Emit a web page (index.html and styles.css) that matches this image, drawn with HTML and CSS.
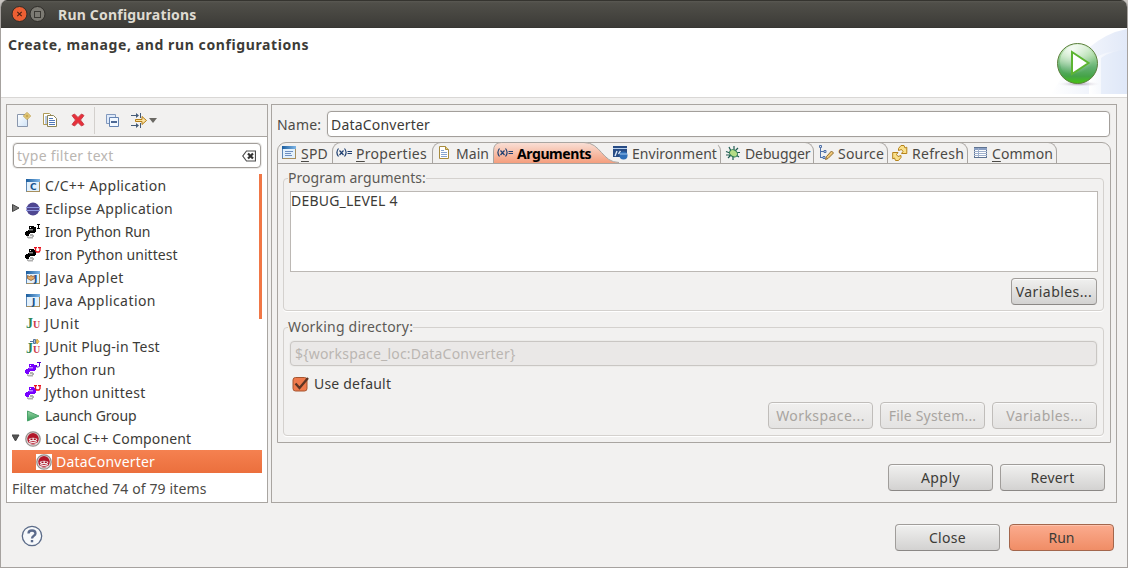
FILE: index.html
```html
<!DOCTYPE html>
<html lang="en">
<head>
<meta charset="utf-8">
<title>Run Configurations</title>
<link rel="stylesheet" href="styles.css">
</head>
<body>
<svg class="defs" width="0" height="0">
  <defs>
    <linearGradient id="paper" x1="0" y1="0" x2="1" y2="1"><stop offset="0" stop-color="#fff"/><stop offset="1" stop-color="#cfe3f7"/></linearGradient>
    <linearGradient id="bar" x1="0" y1="0" x2="1" y2="0"><stop offset="0" stop-color="#1b5d9e"/><stop offset="1" stop-color="#7fb6e6"/></linearGradient>
    <linearGradient id="salmon" x1="0" y1="0" x2="0" y2="1"><stop offset="0" stop-color="#f9e0d7"/><stop offset="1" stop-color="#f59e7d"/></linearGradient>
    <linearGradient id="ball" x1="0" y1="0" x2="0" y2="1"><stop offset="0" stop-color="#d9f0d3"/><stop offset=".3" stop-color="#a5d8a0"/><stop offset=".6" stop-color="#62b070"/><stop offset=".82" stop-color="#45a348"/><stop offset="1" stop-color="#45c411"/></linearGradient>
    <radialGradient id="glow" cx=".35" cy=".15" r=".7"><stop offset="0" stop-color="#fff" stop-opacity=".85"/><stop offset="1" stop-color="#fff" stop-opacity="0"/></radialGradient>
    <linearGradient id="swoosh" x1="0" y1="0" x2="1" y2="0"><stop offset="0" stop-color="#fff"/><stop offset="1" stop-color="#e2e9f8"/></linearGradient>
    <radialGradient id="shadow"><stop offset="0" stop-color="#a59bb0"/><stop offset="1" stop-color="#fff" stop-opacity="0"/></radialGradient>
    <linearGradient id="play" x1="0" y1="0" x2="0" y2="1"><stop offset="0" stop-color="#9ad4a6"/><stop offset="1" stop-color="#2f9a55"/></linearGradient>
  </defs>
  <symbol id="i-win" viewBox="0 0 16 16"><rect x="1.500" y="1.500" width="13" height="12" fill="#e3f1fc" stroke="#a88f5e"/><rect x="1" y="1" width="14" height="3" fill="url(#bar)"/><path d="M1.500 4v9.500" stroke="#5d87b5"/></symbol>
  <symbol id="i-python" viewBox="0 0 16 16"><path d="M4 2h5v1h2v5h-1v1H5v1H4v2H1v-1H0V8h1V7h2V6h1V3z" fill="currentColor"/><path d="M5 3h1v1H5zM4 5.500h4v.8H4z" fill="#fff"/><path d="M5 10h3v1h1v2H8v1.500H3V14H2v-2h3z" class="py-low"/><path d="M3 12h4v1H3z" fill="#fff" opacity=".7"/></symbol>
  <symbol id="i-u" viewBox="0 0 16 16"><path d="M9 .5h3M13 .5h3M10.500.500v3l1 1.500h2.500l1-1.500v-3" stroke="#e8101c" stroke-width="1.300" fill="none"/></symbol>
  <symbol id="i-xeq" viewBox="0 0 16 16"><path d="M2.500 3.500C.5 6 .5 9 2.500 11.500M8.500 3.500c2 2.500 2 5.500 0 8M3.500 5.500l4 4.500M7.500 5.500l-4 4.500" fill="none" stroke="#1f3f70" stroke-width="1.200"/><path d="M11.500 6.500h4.500M11.500 8.500h4.500" stroke="#1f3f70"/></symbol>
  <symbol id="i-skull" viewBox="0 0 16 16"><rect width="16" height="16" fill="#fff"/><circle cx="8" cy="8" r="7.200" fill="#e6e4e4" stroke="#97918f" stroke-width="1.300"/><circle cx="8" cy="7.800" r="5.800" fill="#b2172a"/><path d="M3.500 8Q8 5.500 12.500 8L11 10H5z" fill="#f3e9ea"/><path d="M5.500 7.500h2v1.500h-2zM8.800 7.500h2v1.500h-2z" fill="#a01020"/><path d="M4 12.500l8-2M4 10.500l8 2" stroke="#f3e9ea" stroke-width="1.200"/></symbol>
</svg>
<div class="window">
  <header class="titlebar">
    <svg class="wbtns" width="36" height="20" viewBox="0 0 36 20"><circle cx="9.500" cy="10" r="7.500" fill="#ec5f33" stroke="#2e2c28"/><path d="M7.300 7.800l4.400 4.400m0-4.400l-4.400 4.400" stroke="#4e2214" stroke-width="1.200"/><circle cx="27.500" cy="10" r="7.500" fill="#7c7a73" stroke="#2e2c28"/><rect x="24.500" y="7.500" width="6" height="6" fill="none" stroke="#3b3934"/></svg>
    <span class="t">Run Configurations</span>
  </header>
  <section class="banner">
    <span class="t heading">Create, manage, and run configurations</span>
    <svg class="art" width="76" height="69" viewBox="0 0 76 69"><path d="M0 66Q35 8 76 1V66z" fill="url(#swoosh)"/><path d="M38 66V33Q55 22 76 22V66z" fill="url(#swoosh)"/><path d="M50 30Q62 22 76 22V66H50z" fill="#dbe5f7" opacity=".5"/><ellipse cx="28" cy="56" rx="23" ry="3" fill="url(#shadow)"/><circle cx="26.500" cy="35.500" r="20" fill="url(#ball)" stroke="#5c7f3c"/><circle cx="26.500" cy="34" r="17.500" fill="url(#glow)"/><path d="M21 24v22l16.500-11z" fill="#fff" stroke="#5cb531" stroke-width="2"/></svg>
  </section>
  <main class="content">
    <section class="left">
      <div class="toolbar">
        <svg class="ic" width="16" height="16"><path d="M1.500 2.500h8l2 2v10h-10z" fill="url(#paper)" stroke="#8a97ad"/><path d="M11 .5L14.500 4 11 7.500 7.500 4z" fill="#fff3b8" stroke="#b8902c"/><path d="M11 2v4M9 4h4" stroke="#b8902c"/></svg>
        <svg class="ic copy" width="16" height="16"><path d="M1.500 1.500h6l2 2v9h-8z" fill="#fff" stroke="#b09b56"/><path d="M3 5h2M3 7h2M3 9h2M3 11h2" stroke="#6f8fc0"/><path d="M5.500 3.500h6l3 3v8h-9z" fill="#fff" stroke="#8c8455"/><path d="M7 6.500h4M7 8.500h6M7 10.500h6M7 12.500h6" stroke="#5078b8"/></svg>
        <svg class="ic del" width="16" height="16"><path d="M2 3.500L4.500 2 8 5.500 11.500 2 14 3.500 10.500 8 14 12.500 11.500 14 8 10.500 4.500 14 2 12.500 5.500 8z" fill="#e8303a" stroke="#c8404a"/></svg>
        <i class="sep"></i>
        <svg class="ic" width="16" height="16"><path d="M2.500 2.500h9v9h-9z" fill="#dfeafa" stroke="#8299bd"/><path d="M5.500 5.500h9v9h-9z" fill="#f2f8ff" stroke="#6483b1"/><path d="M7 10h6" stroke="#163a72" stroke-width="1.500"/></svg>
        <svg class="ic flt" width="26" height="16"><path d="M0 3.500h7M0 13.500h7M9.500 1v5M9.500 11v5" stroke="#445b78" fill="none"/><path d="M5 1l3 2.500L5 6M5 11l3 2.500-3 2.500" fill="#445b78"/><path d="M4.500 7.500h6.500v-3l4.500 4-4.500 4v-3H4.500z" fill="#fbe2a0" stroke="#b57e18"/><path d="M18 6h8l-4 5z" fill="#6b6964"/></svg>
      </div>
      <div class="filter"><span class="t s3 ph">type filter text</span>
        <svg width="14" height="12"><path d="M4.500 1h9v10h-9L.8 6z" fill="#fff" stroke="#4c4c4c" stroke-width="1.200"/><path d="M6 3.500l5 5m0-5l-5 5" stroke="#333" stroke-width="2.200"/></svg></div>
      <div class="treewrap">
      <ul class="tree">
        <li><svg class="ic"><use href="#i-win"/><text x="5" y="12" class="g">C</text></svg><span class="t s3">C/C++ Application</span></li>
        <li><svg class="tw"><path d="M.5.500L7 4 .5 7.500z" fill="#777" stroke="#444"/></svg><svg class="ic"><circle cx="8" cy="8" r="6.500" fill="#4f4791"/><path d="M1 6.500h14M1 9.500h14" stroke="#8f97df"/></svg><span class="t s3">Eclipse Application</span></li>
        <li><svg class="ic py-k"><use href="#i-python"/><path d="M12 .5h3M12 4.500h3M13.500 0v5" stroke="#000"/></svg><span class="t sn">Iron Python Run</span></li>
        <li><svg class="ic py-k"><use href="#i-python"/><use href="#i-u"/></svg><span class="t s0">Iron Python unittest</span></li>
        <li><svg class="ic"><use href="#i-win"/><path d="M2.500 5.500l2 1 1.500-1 2 1 1.500-1v3L6 10.500 2.500 8.500z" fill="#e3ac68" stroke="#7c4b20" stroke-width=".7"/><text x="9" y="12" class="g">J</text></svg><span class="t s5">Java Applet</span></li>
        <li><svg class="ic"><use href="#i-win"/><text x="7" y="12" class="g">J</text></svg><span class="t s4">Java Application</span></li>
        <li><svg class="ic"><text x="1" y="12" class="j">J</text><text x="8" y="12" class="u">U</text></svg><span class="t s7">JUnit</span></li>
        <li><svg class="ic"><text x="1" y="14" class="j">J</text><text x="8" y="14" class="u">U</text><path d="M5 2.500h4M8.500.500v4h2v-4z" fill="#9dbbe4" stroke="#56749c"/><path d="M12 0l2 2.500L12 5l-1-2.500z" fill="#f1c34c" stroke="#b98a2a" stroke-width=".7"/></svg><span class="t">JUnit Plug-in Test</span></li>
        <li><svg class="ic py-j"><use href="#i-python"/><path d="M12 .5h4M14.500 0v4l-1 1h-2V3" stroke="#50c" fill="none"/></svg><span class="t">Jython run</span></li>
        <li><svg class="ic py-j"><use href="#i-python"/><use href="#i-u"/></svg><span class="t s3">Jython unittest</span></li>
        <li><svg class="ic"><path d="M2.500 3v10L14 8z" fill="url(#play)" stroke="#4ba36b"/></svg><span class="t sn">Launch Group</span></li>
        <li><svg class="tw"><path d="M0 1h7L3.500 7z" fill="#555" stroke="#444"/></svg><svg class="ic"><use href="#i-skull"/></svg><span class="t s1">Local C++ Component</span></li>
        <li class="child"><svg class="ic"><use href="#i-skull"/></svg><span class="t">DataConverter</span></li>
      </ul><i class="scroll"></i></div>
      <p class="status"><span class="t s1">Filter matched 74 of 79 items</span></p>
    </section>
    <section class="right">
      <div class="namerow"><span class="t lbl">Name:</span><div class="input"><span class="t">DataConverter</span></div></div>
      <div class="folder">
        <nav class="tabs">
          <div class="tab spd"><svg class="ic"><use href="#i-win"/><path d="M4 6.500h8M4 8.500h6M4 10.500h7" stroke="#6f8fc0"/></svg><span class="t"><u>S</u>PD</span></div>
          <div class="tab prop"><svg class="ic"><use href="#i-xeq"/></svg><span class="t s3"><u>P</u>roperties</span></div>
          <div class="tab mainp"><svg class="ic"><path d="M3.500 1.500h6l3 3v9h-9z" fill="#fff" stroke="#a88b3e"/><path d="M9.500 1.500v3h3" fill="#ead37c" stroke="#a88b3e"/><path d="M5 5.500h3M5 7.500h6M5 9.500h6M5 11.500h6" stroke="#86a3cf"/></svg><span class="t s0">Main</span></div>
          <div class="tab args"><svg class="shape" width="130" height="21"><path d="M.5 21V9Q.5.500 8.500.500H91C108 .5 109 20.500 126 20.500V21z" fill="url(#salmon)"/><path d="M.5 21V9Q.5.500 8.500.500H91C108 .5 109 20.500 126 20.500" fill="none" stroke="#aaa6a2"/></svg><svg class="ic"><use href="#i-xeq"/></svg><span class="t">Arguments</span></div>
          <div class="tab r env"><svg class="ic"><rect x="1" y="1" width="14" height="11" fill="#274b84"/><path d="M1 3.500h14" stroke="#b9d0ee"/><path d="M3 11l2-5m1.500 3l2-3" stroke="#dbe8f8" stroke-width="1.400"/><circle cx="11.500" cy="10.500" r="4" fill="#2f6fb8"/><path d="M8 9h7" stroke="#9cc4ee"/></svg><span class="t s0">Environment</span></div>
          <div class="tab r dbg"><svg class="ic"><path d="M4 2l2 4M1 6.500l4 1.500M9 1v4M13 3l-3 3M15 7.500h-3M14 12l-3-2M8 11v4M3 13l3-3M1 10h4" stroke="#1d5a50" stroke-width="1.200"/><ellipse cx="8.500" cy="8.300" rx="4.200" ry="3.300" fill="#b5dd86" stroke="#2d7a55" transform="rotate(35 8.500 8.300)"/></svg><span class="t sn">Debugger</span></div>
          <div class="tab r src"><svg class="ic"><path d="M2.500 3v10M2.500 6.500h4M2.500 12.500h4" stroke="#5272a8" fill="none"/><path d="M1.500.500h2v2h-2zM6 5.500h2v2h-2zM5 11.500h2v2H5z" fill="#dfeafa" stroke="#5272a8"/><path d="M7.500 14.500l1-3 5-5.500 2 2-5.500 5.500z" fill="#f0c878" stroke="#8f6a2c"/></svg><span class="t">Source</span></div>
          <div class="tab r ref"><svg class="ic"><path d="M6.500 3.500L9 .5h3l1 2.500 1.800-.8V8.500H9.500l1.500-2-1.500-2-3 1z" fill="#fae08a" stroke="#b5821a"/><path d="M9 12.500L6.500 15.500h-3L2.500 13l-1.800.8V7.500H6l-1.500 2 1.500 2 3-1z" fill="#fae08a" stroke="#b5821a"/></svg><span class="t s3">Refresh</span></div>
          <div class="tab r com"><svg class="ic"><rect x="2.500" y="2.500" width="12" height="10" fill="#fff" stroke="#5f7391"/><path d="M2 4h13" stroke="#8ba0c4" stroke-width="2"/><path d="M2 6.500h13M2 8.500h13M2 10.500h13M6.500 3v9" stroke="#9fb0cc"/></svg><span class="t s0"><u>C</u>ommon</span></div>
        </nav>
        <div class="page">
          <fieldset class="group g1"><legend><span class="t s0">Program arguments:</span></legend>
            <div class="area"><span class="t">DEBUG_LEVEL 4</span></div>
            <div class="btns"><button class="b small"><span class="t s4">Variables...</span></button></div>
          </fieldset>
          <fieldset class="group g2"><legend><span class="t">Working directory:</span></legend>
            <div class="input off"><span class="t">${workspace_loc:DataConverter}</span></div>
            <div class="check"><svg width="18" height="18"><rect x="2" y="2.500" width="14" height="13.500" rx="2.500" fill="#ef7a4c" stroke="#a5552f"/><path d="M4.500 8.500l4 4.500L17 3" fill="none" stroke="#5e3524" stroke-width="2.300"/></svg><span class="t">Use default</span></div>
            <div class="btns"><button class="b dis"><span class="t s4">Workspace...</span></button><button class="b dis"><span class="t">File System...</span></button><button class="b dis"><span class="t s4">Variables...</span></button></div>
          </fieldset>
        </div>
      </div>
      <div class="btns apply"><button class="b"><span class="t s4">Apply</span></button><button class="b"><span class="t s3">Revert</span></button></div>
    </section>
  </main>
  <footer class="footer">
    <svg width="22" height="22"><circle cx="11" cy="11" r="9.700" fill="#f7f9fb" stroke="#5b6b88" stroke-width="1.300"/><path d="M7.500 8.500C7.500 4.500 14.500 4.500 14.500 8.500 14.500 11 11 10.500 11 13.500" fill="none" stroke="#5b6b8c" stroke-width="2.300"/><path d="M9.800 15h2.400v2.300H9.800z" fill="#5b6b8c"/></svg>
    <div class="btns end"><button class="b"><span class="t s3">Close</span></button><button class="b run"><span class="t s0">Run</span></button></div>
  </footer>
</div>
</body>
</html>
```
FILE: styles.css
```css
* { box-sizing: border-box; }
body { margin: 0; font: 14px/23px "Noto Sans", sans-serif; color: #3c3b37; background: #c8c4c0; }
.defs { position: absolute; }
.t { white-space: nowrap; letter-spacing: .2px; }
.sn { letter-spacing: -.12px; }
.s0 { letter-spacing: .04px; }
.s1 { letter-spacing: .12px; }
.s3 { letter-spacing: .3px; }
.s4 { letter-spacing: .43px; }
.s5 { letter-spacing: .54px; }
.s7 { letter-spacing: .7px; }
.ic { width: 16px; height: 16px; flex: none; }
.window { width: 1128px; height: 568px; display: flex; flex-direction: column; background: #f2f1f0; border: 1px solid #a6a29f; border-top: 0; border-radius: 7px 7px 0 0; overflow: hidden; }
.titlebar { height: 28px; flex: none; margin: 0 -1px; padding-left: 10px; display: flex; align-items: center; gap: 12px; background: linear-gradient(#35342f 0, #35342f 1px, #5a5953 1px, #504f49 3px, #3c3b37 27px, #33322e 28px); color: #dfdbd2; font-weight: bold; }
.banner { height: 70px; flex: none; background: #fff; border-bottom: 1px solid #d9d7d5; display: flex; justify-content: space-between; padding-left: 7px; }
.heading { font-weight: bold; line-height: 34px; letter-spacing: .6px; }
.content { display: flex; gap: 3px; padding: 6px 0 0 5px; }
.left, .right { height: 399px; border: 1px solid #a9a5a1; }
.left { width: 262px; background: #fff; }
.toolbar { height: 32px; background: #f2f1f0; border-bottom: 1px solid #a9a5a1; display: flex; align-items: center; padding: 0 0 1px 9px; }
.copy { margin-left: 10px; }
.del { margin-left: 12px; }
.sep { width: 1px; height: 27px; background: #d3d0cd; margin: 0 9px 0 8px; }
.flt { width: 26px; margin-left: 11px; }
.filter, .input { height: 26px; border: 1px solid #a39f9b; border-radius: 4px; background: #fff; box-shadow: 0 0 0 1px #ecebe9; display: flex; align-items: center; padding: 0 4px; }
.filter { width: 248px; height: 25px; margin: 6px 0 0 6px; padding-left: 3px; justify-content: space-between; }
.ph { color: #bab6b2; }
.treewrap { margin: 6px 0 0 5px; width: 250px; position: relative; }
.tree { list-style: none; margin: 0; padding: 0; }
.tree li { height: 23px; display: flex; align-items: center; padding-left: 13px; gap: 4px; }
.tw { width: 8px; height: 8px; margin: 0 0 2px -13px; flex: none; }
.tw + .ic { margin-left: 1px; }
.tree li.child { padding-left: 24px; background: linear-gradient(#f58150, #eb6f3d); color: #fff; }
.scroll { position: absolute; right: 0; top: 0; width: 3px; height: 145px; background: #f07746; }
.status { margin: 4px 0 0 5px; color: #4c4a46; }
.g { font: bold 9px "DejaVu Sans", sans-serif; fill: #17528c; }
.j { font: bold 14px "Liberation Serif", serif; fill: #2e8555; }
.u { font: bold 10px "Liberation Serif", serif; fill: #cc3a4b; }
.py-k { color: #000; }
.py-low { fill: #b0b0b0; }
.py-j { color: #70f; }
.py-j .py-low { fill: #a8d4f8; }
.right { width: 846px; }
.namerow { display: flex; padding: 6px 6px 0 5px; align-items: center; }
.lbl { width: 50px; color: #4c4a46; }
.namerow .input { flex: 1; padding: 0 3px; }
.folder { margin: 5px 0 0 5px; width: 834px; height: 301px; border: 1px solid #a9a5a1; border-radius: 9px 9px 0 0; }
.tabs { height: 21px; display: flex; border-bottom: 1px solid #a9a5a1; color: #4c4a46; }
.tab { display: flex; align-items: center; position: relative; flex: none; }
.tab .t { position: relative; }
.tab u { text-underline-offset: 2px; }
.spd { width: 54px; padding-left: 3px; gap: 4px; }
.prop { width: 100px; padding-left: 3px; gap: 4px; }
.mainp { width: 61px; padding-left: 3px; gap: 4px; }
.prop, .mainp { border: 1px solid #a9a5a1; border-width: 1px 0 0 1px; border-top-left-radius: 9px; margin-top: -1px; }
.args { width: 119px; padding-left: 4px; gap: 4px; color: #000; font-weight: bold; }
.args .t { letter-spacing: -.42px; }
.shape { position: absolute; left: 0; top: -1px; }
.args .ic { position: relative; }
.r { border: 1px solid #a9a5a1; border-width: 1px 1px 0 0; border-top-right-radius: 9px; margin-top: -1px; padding-left: 4px; gap: 4px; }
.env { width: 109px; padding-left: 0; border-top-color: transparent; }
.dbg { width: 93px; }
.src { width: 74px; }
.ref { width: 80px; }
.com { width: 89px; }
.page { padding: 3px 5px 0; }
.group { margin: 0; padding: 0 5px 0 6px; border: 1px solid #d4d1ce; border-radius: 4px; box-shadow: 0 1px 0 #fff; width: 821px; }
.group legend { padding: 0; margin-left: -2px; line-height: 22px; height: 22px; color: #5c5a56; }
.g1 { height: 144px; }
.g2 { height: 120px; margin-top: 5px; }
.area { height: 81px; width: 808px; margin-top: 2px; border: 1px solid #bcb8b4; background: #fff; line-height: 17px; }
.btns { display: flex; justify-content: flex-end; gap: 7px; }
.b { width: 105px; height: 27px; padding: 0; border: 1px solid #a09d9a; border-bottom-color: #8b8886; border-radius: 4px; background: linear-gradient(#f0f0ef, #d3d2d1); box-shadow: inset 0 1px 0 #fafafa; font: inherit; color: #3c3b37; text-align: center; }
.small { width: 86px; }
.dis { border-color: #c0bdba; background: linear-gradient(#f0efee, #e4e3e2); color: #a8a4a0; }
.run { background: linear-gradient(#fbab8e, #f08d66); border-color: #a3664c; box-shadow: inset 0 1px 0 #fdc2ac; }
.g1 .btns { margin: 6px 1px 0 0; }
.off { height: 25px; margin: 3px 1px 0 0; background: #eae8e7; border-color: #c9c6c3; color: #bab6b2; }
.check { display: flex; align-items: center; gap: 5px; margin: 6px 0 0 1px; }
.g2 .btns { margin: 7px 1px 0 0; }
.apply { margin: 21px 11px 0 0; }
.footer { display: flex; justify-content: space-between; align-items: center; padding: 21px 13px 0 20px; }
.footer > svg { margin-top: -3px; }
.end { gap: 9px; }
```
